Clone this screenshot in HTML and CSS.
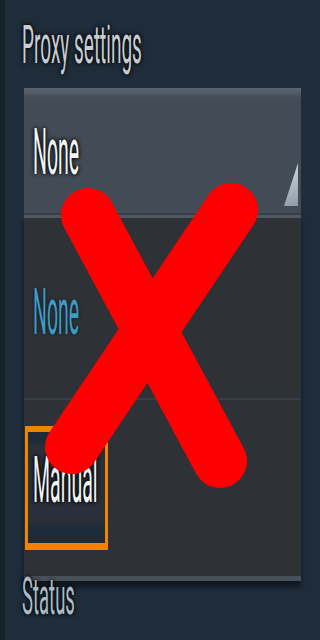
FILE: index.html
```html
<!DOCTYPE html>
<html>
<head>
<meta charset="utf-8">
<link rel="stylesheet" href="styles.css">
</head>
<body>
<div class="screen">
  <div class="title"><span class="label label-title">Proxy settings</span></div>
  <div class="dropdown">
    <span class="label label-item">None</span>
    <span class="arrow"></span>
  </div>
  <div class="list">
    <div class="item item-none"><span class="label label-item label-blue">None</span></div>
    <div class="item item-manual">
      <div class="focus"><span class="label label-item">Manual</span></div>
    </div>
  </div>
  <div class="status"><span class="label label-status">Status</span></div>
  <svg class="cross" width="320" height="640" viewBox="0 0 320 640">
    <line x1="88" y1="215" x2="220" y2="461" stroke="#ff0000" stroke-width="54" stroke-linecap="round"/>
    <line x1="231" y1="210" x2="72" y2="447" stroke="#ff0000" stroke-width="54" stroke-linecap="round"/>
  </svg>
</div>
</body>
</html>
```
FILE: styles.css
```css
html, body {
  margin: 0;
  padding: 0;
  background: #1f2d3b;
}
.screen {
  position: relative;
  width: 320px;
  height: 640px;
  box-sizing: border-box;
  border-left: 5px solid #152029;
  padding: 0 19px;
  overflow: hidden;
  font-family: Roboto, "Liberation Sans", sans-serif;
}
.label {
  display: block;
  white-space: nowrap;
  transform-origin: 0 84.18%;
  text-shadow: 0 0 2px #000, 0 0 3px rgba(0,0,0,0.8);
}
.label-title {
  font-size: 19px;
  line-height: 19px;
  height: 19px;
  color: #c6ccd2;
  transform: scaleY(2.8);
}
.label-item {
  font-size: 19.5px;
  line-height: 20px;
  height: 20px;
  color: #f2f4f5;
  transform: scaleY(3.35);
}
.label-blue {
  color: #3d9cc7;
  text-shadow: 0 0 2px rgba(0,0,0,0.6);
}
.label-status {
  font-size: 18.5px;
  line-height: 18.5px;
  height: 18.5px;
  color: #a9bbc7;
  transform: scaleY(2.85);
}
.title {
  height: 88px;
  box-sizing: border-box;
  padding-top: 47px;
  margin-left: -2px;
}
.dropdown {
  height: 127px;
  box-sizing: border-box;
  display: flex;
  align-items: flex-end;
  padding: 0 3px 7px 9px;
  background: linear-gradient(#5d656d 0, #555d66 4px, #474f59 8px, #434c56 12px, #434c56 100%);
  border-bottom: 2px solid #373f47;
}
.dropdown .label {
  align-self: flex-start;
  margin-top: 72px;
}
.arrow {
  margin-left: auto;
  width: 14px;
  height: 43px;
  clip-path: polygon(100% 0, 100% 100%, 0 100%);
  background: linear-gradient(160deg, #d0dae0, #8f9ca7);
}
.list {
  background: #2e3237;
  border-top: 3px solid #50575e;
  border-bottom: 5px solid #4a5057;
  box-shadow: 0 6px 5px rgba(8, 14, 20, 0.7);
}
.item-none {
  height: 182px;
  box-sizing: border-box;
  padding: 102px 0 0 9px;
  border-bottom: 2px solid #383e45;
}
.item-manual {
  height: 176px;
  box-sizing: border-box;
  padding: 26px 0 0 1px;
}
.focus {
  width: 83px;
  height: 124px;
  box-sizing: border-box;
  border-style: solid;
  border-color: #f08300;
  border-width: 6px 3px 7px 3px;
  padding: 56px 0 0 5px;
  background: linear-gradient(#1d2b39 0, #1d2b39 8px, #2a3039 14px, #2a3039 88px, #1f2c39 96px, #1d2b39 100%);
}
.status {
  padding-top: 19px;
  margin-left: -2px;
}
.cross {
  position: absolute;
  left: -5px;
  top: 0;
  pointer-events: none;
}
```
